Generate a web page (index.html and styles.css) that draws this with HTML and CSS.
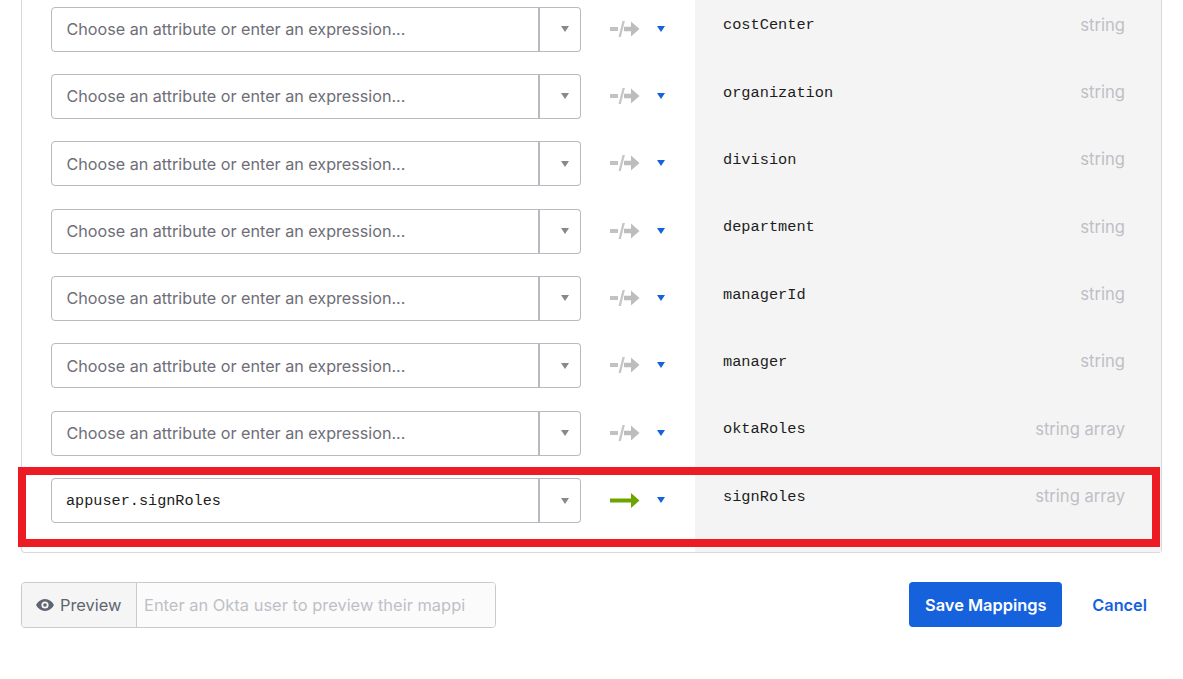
FILE: index.html
```html
<!DOCTYPE html>
<html lang="en">
<head>
<meta charset="utf-8">
<title>Mappings</title>
<link rel="stylesheet" href="styles.css">
</head>
<body>
<svg class="defs" width="0" height="0" aria-hidden="true">
  <symbol id="none" viewBox="0 0 30 18">
    <path d="M0 7h8v4H0z" fill="#c2c2c2"/>
    <path d="M8.500 17 12.500 1h2.400l-4 16z" fill="#c6c6c6"/>
    <path d="M14 6.800h7V1.500l8.500 7.500-8.500 7.500v-5.300h-7z" fill="#bdbdbd"/>
  </symbol>
</svg>
<main class="page">
  <section class="panel">
    <div class="row">
      <div class="source">
        <div class="combo"><input class="field" placeholder="Choose an attribute or enter an expression..."><span class="toggle"><i class="caret"></i></span></div>
        <svg class="arrow"><use href="#none"/></svg><i class="push"></i>
      </div>
      <div class="target"><span class="name">costCenter</span><span class="type">string</span></div>
    </div>
    <div class="row">
      <div class="source">
        <div class="combo"><input class="field" placeholder="Choose an attribute or enter an expression..."><span class="toggle"><i class="caret"></i></span></div>
        <svg class="arrow"><use href="#none"/></svg><i class="push"></i>
      </div>
      <div class="target"><span class="name">organization</span><span class="type">string</span></div>
    </div>
    <div class="row">
      <div class="source">
        <div class="combo"><input class="field" placeholder="Choose an attribute or enter an expression..."><span class="toggle"><i class="caret"></i></span></div>
        <svg class="arrow"><use href="#none"/></svg><i class="push"></i>
      </div>
      <div class="target"><span class="name">division</span><span class="type">string</span></div>
    </div>
    <div class="row">
      <div class="source">
        <div class="combo"><input class="field" placeholder="Choose an attribute or enter an expression..."><span class="toggle"><i class="caret"></i></span></div>
        <svg class="arrow"><use href="#none"/></svg><i class="push"></i>
      </div>
      <div class="target"><span class="name">department</span><span class="type">string</span></div>
    </div>
    <div class="row">
      <div class="source">
        <div class="combo"><input class="field" placeholder="Choose an attribute or enter an expression..."><span class="toggle"><i class="caret"></i></span></div>
        <svg class="arrow"><use href="#none"/></svg><i class="push"></i>
      </div>
      <div class="target"><span class="name">managerId</span><span class="type">string</span></div>
    </div>
    <div class="row">
      <div class="source">
        <div class="combo"><input class="field" placeholder="Choose an attribute or enter an expression..."><span class="toggle"><i class="caret"></i></span></div>
        <svg class="arrow"><use href="#none"/></svg><i class="push"></i>
      </div>
      <div class="target"><span class="name">manager</span><span class="type">string</span></div>
    </div>
    <div class="row">
      <div class="source">
        <div class="combo"><input class="field" placeholder="Choose an attribute or enter an expression..."><span class="toggle"><i class="caret"></i></span></div>
        <svg class="arrow"><use href="#none"/></svg><i class="push"></i>
      </div>
      <div class="target"><span class="name">oktaRoles</span><span class="type">string array</span></div>
    </div>
    <div class="row last">
      <div class="source">
        <div class="combo"><input class="field mono" value="appuser.signRoles"><span class="toggle"><i class="caret"></i></span></div>
        <svg class="arrow" viewBox="0 0 30 18"><path d="M0 7.500h21V2l8.500 7.500-8.500 7.500v-5.500H0z" fill="#6ea300"/></svg><i class="push"></i>
      </div>
      <div class="target"><span class="name">signRoles</span><span class="type">string array</span></div>
    </div>
    <div class="highlight"></div>
  </section>
  <footer class="actions">
    <div class="preview">
      <button class="preview-btn" type="button">
        <svg class="eye" viewBox="0 0 18 12"><path fill-rule="evenodd" d="M9 0C5 0 2 2.400 0 6c2 3.600 5 6 9 6s7-2.400 9-6c-2-3.600-5-6-9-6zm0 2.400a3.600 3.600 0 1 1 0 7.200 3.600 3.600 0 0 1 0-7.200zM9 4.200a1.800 1.800 0 1 0 0 3.600 1.800 1.800 0 0 0 0-3.600z" fill="#5f6570"/></svg>
        Preview
      </button>
      <input class="preview-input" placeholder="Enter an Okta user to preview their mappi">
    </div>
    <button class="save" type="button">Save Mappings</button>
    <a class="cancel" href="#">Cancel</a>
  </footer>
</main>
</body>
</html>
```
FILE: styles.css
```css
* { box-sizing: border-box; }
html, body { margin: 0; height: 100%; overflow: hidden; background: #fff; }
body { font-family: Inter, "Liberation Sans", sans-serif; color: #1d1d21; }
.defs { display: block; height: 0; }
.page { width: 1183px; padding: 0 21px; }

.panel {
  position: relative;
  width: 1141px;
  margin-top: -4.400px;
  border: 1px solid #d7d7dc;
  border-top: 0;
  border-radius: 0 0 4px 4px;
}
.row { display: flex; height: 67.350px; }
.row.last { height: 85.300px; }
.source { width: 673px; padding: 11px 0 0 29px; display: flex; align-items: flex-start; }
.combo { display: flex; width: 530px; height: 45px; }
.field {
  width: 488px;
  height: 45px;
  padding: 0 14.500px;
  border: 1px solid #b9b9bf;
  border-radius: 4px 0 0 4px;
  background: #fff;
  font: 400 16.150px Inter, "Liberation Sans", sans-serif;
  color: #1d1d21;
  outline: 0;
}
.field::placeholder { color: #6e6e78; opacity: 1; }
.field.mono { padding-left: 14px; font: 400 15.200px "Liberation Mono", monospace; }
.toggle {
  width: 43px;
  height: 45px;
  margin-left: -1px;
  border: 1px solid #b9b9bf;
  border-left-width: 2px;
  border-radius: 0 4px 4px 0;
  display: flex;
  align-items: center;
  justify-content: center;
  padding-left: 10px;
}
.caret { width: 0; height: 0; border: 4.500px solid transparent; border-top: 6px solid #888; border-bottom: 0; }
.arrow { width: 30px; height: 18px; margin: 13px 0 0 29px; flex: none; }
.push { width: 0; height: 0; margin: 19px 0 0 17px; border: 4px solid transparent; border-top: 6px solid #1662dd; border-bottom: 0; flex: none; }
.target {
  flex: 1;
  background: #f4f4f4;
  padding: 19.600px 36px 0 28px;
  display: flex;
  justify-content: space-between;
  align-items: flex-start;
  line-height: 20px;
}
.name { font: 400 15.300px/20px "Liberation Mono", monospace; color: #1d1d21; }
.type { margin-top: -0.500px; font-size: 16.600px; color: #bfbfc5; }
.highlight {
  position: absolute;
  left: -4px;
  right: 1px;
  bottom: 5px;
  height: 80px;
  border: 8px solid #ed1c24;
  pointer-events: none;
}

.actions { display: flex; align-items: flex-start; margin-top: 29px; width: 1141px; }
.preview { display: flex; width: 475px; height: 46px; border: 1px solid #c9c9ce; border-radius: 4px; overflow: hidden; }
.preview-btn {
  width: 115px;
  border: 0;
  border-right: 1px solid #c9c9ce;
  background: #f5f5f5;
  font: 400 16.400px Inter, "Liberation Sans", sans-serif;
  color: #5f6570;
  display: flex;
  align-items: center;
  gap: 6px;
  padding: 0 0 0 14px;
}
.eye { width: 18px; height: 12px; flex: none; }
.preview-input { flex: 1; min-width: 0; border: 0; background: #fbfbfb; padding: 0 7px; font: 400 16.450px Inter, "Liberation Sans", sans-serif; outline: 0; }
.preview-input::placeholder { color: #bfc0c6; opacity: 1; }
.save {
  margin-left: auto;
  width: 153px;
  height: 45px;
  padding: 1px 0 0;
  border: 0;
  border-radius: 4px;
  background: #1662dd;
  color: #fff;
  font: 600 16.400px Inter, "Liberation Sans", sans-serif;
}
.cancel {
  margin: 0 15px 0 30px;
  color: #1662dd;
  font: 600 16.300px/46px Inter, "Liberation Sans", sans-serif;
  text-decoration: none;
}
```
